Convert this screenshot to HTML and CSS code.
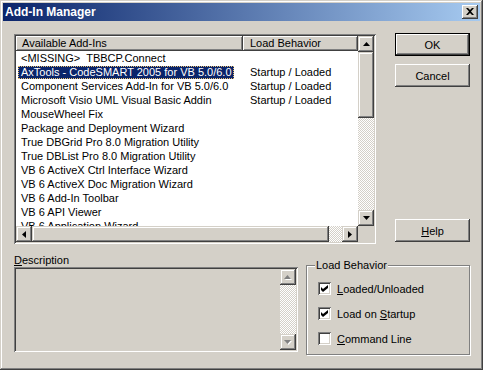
FILE: index.html
```html
<!DOCTYPE html>
<html lang="en">
<head>
    <meta charset="UTF-8">
    <title>Add-In Manager</title>
    <link rel="stylesheet" href="styles.css">
</head>
<body>

<div class="window">
    <div class="titlebar">
        <span class="title">Add-In Manager</span>
        <span class="close">
            <svg width="8" height="7" viewBox="0 0 8 7"><path d="M0 0h2l2 2 2-2h2L5 3.5 8 7H6L4 5 2 7H0l3-3.5z" fill="#000"/></svg>
        </span>
    </div>

    <div class="content">
        <div class="top">
            <div class="listview">
                <div class="lv-main">
                    <div class="lv-cols">
                        <div class="lv-header">
                            <div class="hd hd-name">Available Add-Ins</div>
                            <div class="hd hd-load">Load Behavior</div>
                        </div>
                        <div class="lv-rows">
                            <div class="row"><div class="name"><span>&lt;MISSING&gt;&nbsp; TBBCP.Connect</span></div><div class="load"></div></div>
                            <div class="row selected"><div class="name"><span>AxTools - CodeSMART 2005 for VB 5.0/6.0</span></div><div class="load">Startup / Loaded</div></div>
                            <div class="row"><div class="name"><span>Component Services Add-In for VB 5.0/6.0</span></div><div class="load">Startup / Loaded</div></div>
                            <div class="row"><div class="name"><span>Microsoft Visio UML Visual Basic Addin</span></div><div class="load">Startup / Loaded</div></div>
                            <div class="row"><div class="name"><span>MouseWheel Fix</span></div><div class="load"></div></div>
                            <div class="row"><div class="name"><span>Package and Deployment Wizard</span></div><div class="load"></div></div>
                            <div class="row"><div class="name"><span>True DBGrid Pro 8.0 Migration Utility</span></div><div class="load"></div></div>
                            <div class="row"><div class="name"><span>True DBList Pro 8.0 Migration Utility</span></div><div class="load"></div></div>
                            <div class="row"><div class="name"><span>VB 6 ActiveX Ctrl Interface Wizard</span></div><div class="load"></div></div>
                            <div class="row"><div class="name"><span>VB 6 ActiveX Doc Migration Wizard</span></div><div class="load"></div></div>
                            <div class="row"><div class="name"><span>VB 6 Add-In Toolbar</span></div><div class="load"></div></div>
                            <div class="row"><div class="name"><span>VB 6 API Viewer</span></div><div class="load"></div></div>
                            <div class="row"><div class="name"><span>VB 6 Application Wizard</span></div><div class="load"></div></div>
                        </div>
                    </div>
                    <div class="vscroll">
                        <div class="sb-btn"><svg width="7" height="4" viewBox="0 0 7 4"><path d="M3.5 0L7 4H0z" fill="#000"/></svg></div>
                        <div class="sb-thumb v-thumb"></div>
                        <div class="sb-track"></div>
                        <div class="sb-btn"><svg width="7" height="4" viewBox="0 0 7 4"><path d="M0 0h7L3.5 4z" fill="#000"/></svg></div>
                    </div>
                </div>
                <div class="hscroll">
                    <div class="sb-btn"><svg width="4" height="7" viewBox="0 0 4 7"><path d="M4 0v7L0 3.5z" fill="#000"/></svg></div>
                    <div class="sb-thumb h-thumb"></div>
                    <div class="sb-track"></div>
                    <div class="sb-btn"><svg width="4" height="7" viewBox="0 0 4 7"><path d="M0 0v7l4-3.5z" fill="#000"/></svg></div>
                    <div class="corner"></div>
                </div>
            </div>

            <div class="buttons">
                <button class="btn default">OK</button>
                <button class="btn">Cancel</button>
                <button class="btn help"><u>H</u>elp</button>
            </div>
        </div>

        <div class="bottom">
            <div class="desc">
                <div class="desc-label"><u>D</u>escription</div>
                <div class="desc-box">
                    <div class="desc-text"></div>
                    <div class="vscroll disabled">
                        <div class="sb-btn"><svg width="8" height="5" viewBox="0 0 8 5"><path d="M4.5 1L8 5H1z" fill="#fff"/><path d="M3.5 0L7 4H0z" fill="#808080"/></svg></div>
                        <div class="sb-track"></div>
                        <div class="sb-btn"><svg width="8" height="5" viewBox="0 0 8 5"><path d="M1 1h7L4.5 5z" fill="#fff"/><path d="M0 0h7L3.5 4z" fill="#808080"/></svg></div>
                    </div>
                </div>
            </div>

            <div class="group">
                <div class="group-title">Load Behavior</div>
                <div class="checks">
                    <label class="check"><span class="box"><svg width="7" height="7" viewBox="0 0 7 7"><path d="M0 2l2 2 5-4v3L2 7 0 5z" fill="#000"/></svg></span><span><u>L</u>oaded/Unloaded</span></label>
                    <label class="check"><span class="box"><svg width="7" height="7" viewBox="0 0 7 7"><path d="M0 2l2 2 5-4v3L2 7 0 5z" fill="#000"/></svg></span><span>Load on <u>S</u>tartup</span></label>
                    <label class="check"><span class="box"></span><span><u>C</u>ommand Line</span></label>
                </div>
            </div>
        </div>
    </div>
</div>

</body>
</html>
```

FILE: styles.css
```css
body {
    margin: 0;
    background: #d4d0c8;
    font-family: "Liberation Sans", Arial, sans-serif;
    font-size: 11px;
    color: #000;
}
.window {
    width: 483px;
    height: 370px;
    box-sizing: border-box;
    padding: 3px;
    background: #d4d0c8;
    box-shadow: inset -1px -1px #404040, inset 1px 1px #d4d0c8, inset -2px -2px #808080, inset 2px 2px #fff;
    display: flex;
    flex-direction: column;
}

/* title bar */
.titlebar {
    height: 18px;
    display: flex;
    align-items: center;
    justify-content: space-between;
    padding: 0 2px;
    background: linear-gradient(to right, #0a246a, #a6caf0);
}
.title {
    color: #fff;
    font-weight: bold;
    font-size: 12px;
}
.close {
    width: 16px;
    height: 14px;
    box-sizing: border-box;
    background: #d4d0c8;
    box-shadow: inset -1px -1px #404040, inset 1px 1px #fff, inset -2px -2px #808080;
    display: flex;
    align-items: center;
    justify-content: center;
    padding-bottom: 1px;
}
.close svg { display: block; }

.content {
    padding: 12px 10px 0 11px;
}

/* list + buttons */
.top {
    display: flex;
    height: 211px;
}
.listview {
    width: 362px;
    height: 210px;
    margin-top: 1px;
    box-sizing: border-box;
    padding: 2px;
    background: #fff;
    box-shadow: inset 1px 1px #808080, inset -1px -1px #fff, inset 2px 2px #404040, inset -2px -2px #d4d0c8;
    display: flex;
    flex-direction: column;
}
.lv-main {
    display: flex;
    height: 190px;
    overflow: hidden;
}
.lv-cols {
    flex: 1;
    overflow: hidden;
}
.lv-header {
    display: flex;
    height: 15px;
}
.hd {
    box-sizing: border-box;
    background: #d4d0c8;
    box-shadow: inset -1px -1px #404040, inset 1px 1px #fff, inset -2px -2px #808080;
    line-height: 15px;
    white-space: nowrap;
}
.hd-name {
    width: 227px;
    padding-left: 6px;
}
.hd-load {
    flex: 1;
    padding-left: 7px;
}
.row {
    display: flex;
    align-items: center;
    height: 14px;
    white-space: nowrap;
}
.row .name {
    width: 227px;
    flex-shrink: 0;
    padding-left: 2px;
    box-sizing: border-box;
}
.row .name span {
    display: inline-block;
    line-height: 13px;
    padding: 0 2px 0 3px;
}
.row .load {
    line-height: 13px;
    padding-left: 7px;
}
.row.selected .name span {
    background: #0a246a;
    color: #fff;
    outline: 1px dotted #e8c070;
    outline-offset: -1px;
}

/* scrollbars */
.vscroll {
    width: 16px;
    display: flex;
    flex-direction: column;
}
.hscroll {
    height: 16px;
    display: flex;
}
.sb-btn, .sb-thumb {
    width: 16px;
    height: 16px;
    box-sizing: border-box;
    background: #d4d0c8;
    box-shadow: inset -1px -1px #404040, inset 1px 1px #d4d0c8, inset -2px -2px #808080, inset 2px 2px #fff;
    display: flex;
    align-items: center;
    justify-content: center;
    flex-shrink: 0;
}
.sb-btn svg { display: block; }
.v-thumb { height: 66px; }
.h-thumb { width: 297px; }
.sb-track {
    flex: 1;
    background: repeating-conic-gradient(#fff 0 25%, #d4d0c8 0 50%) 0 0 / 2px 2px;
}
.corner {
    width: 16px;
    background: #d4d0c8;
}

.buttons {
    width: 75px;
    margin-left: 19px;
    display: flex;
    flex-direction: column;
}
.btn {
    width: 75px;
    height: 23px;
    margin: 0;
    padding: 0;
    border: none;
    background: #d4d0c8;
    font-family: inherit;
    font-size: 11px;
    color: #000;
    box-shadow: inset -1px -1px #404040, inset 1px 1px #fff, inset -2px -2px #808080;
}
.btn.default {
    box-shadow: inset 0 0 0 1px #000, inset -2px -2px #404040, inset 2px 2px #fff, inset -3px -3px #808080;
}
.btn + .btn { margin-top: 8px; }
.btn.help {
    margin-top: auto;
    margin-bottom: 2px;
}

/* description + group */
.bottom {
    display: flex;
}
.desc {
    width: 284px;
    padding-top: 10px;
}
.desc-label {
    height: 13px;
    line-height: 13px;
}
.desc-box {
    height: 85px;
    box-sizing: border-box;
    padding: 2px;
    box-shadow: inset 1px 1px #808080, inset -1px -1px #fff, inset 2px 2px #404040, inset -2px -2px #d4d0c8;
    display: flex;
}
.desc-text { flex: 1; }

.group {
    width: 164px;
    height: 90px;
    box-sizing: border-box;
    margin-top: 21px;
    margin-left: 8px;
    border: 1px solid #808080;
    box-shadow: inset 1px 1px #fff, 1px 1px #fff;
    padding-left: 8px;
}
.group-title {
    width: fit-content;
    margin-top: -7px;
    padding: 0 1px;
    line-height: 13px;
    background: #d4d0c8;
}
.checks {
    display: flex;
    flex-direction: column;
    gap: 12px;
    margin-top: 10px;
    padding-left: 3px;
}
.check {
    display: flex;
    align-items: center;
    height: 13px;
    white-space: nowrap;
}
.box {
    width: 13px;
    height: 13px;
    box-sizing: border-box;
    background: #fff;
    box-shadow: inset 1px 1px #808080, inset -1px -1px #fff, inset 2px 2px #404040, inset -2px -2px #d4d0c8;
    display: flex;
    align-items: center;
    justify-content: center;
    margin-right: 6px;
}
.box svg { display: block; }
```
